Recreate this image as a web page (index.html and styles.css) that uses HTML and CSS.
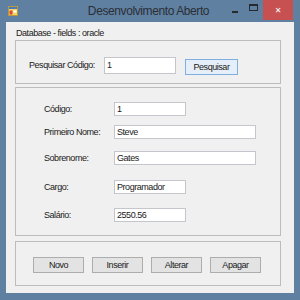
FILE: index.html
```html
<!DOCTYPE html>
<html lang="pt">
<head>
  <meta charset="UTF-8">
  <title>Desenvolvimento Aberto</title>
  <link rel="stylesheet" href="styles.css">
</head>
<body>

<div class="window">
  <div class="titlebar">
    <div class="title-left">
      <svg class="app-icon" width="10" height="10" viewBox="0 0 10 10">
        <rect x="0.5" y="0.5" width="9" height="9" fill="#f3d46a" stroke="#b89a3a"/>
        <rect x="1" y="1" width="8" height="2" fill="#4a78c2"/>
        <rect x="1.5" y="4.5" width="3" height="4" fill="#d8473a"/>
        <rect x="5.5" y="4.5" width="3" height="2" fill="#ffffff"/>
      </svg>
    </div>
    <div class="title">Desenvolvimento Aberto</div>
    <div class="controls">
      <span class="btn-min"><i></i></span>
      <span class="btn-max"><i></i></span>
      <span class="btn-close">&#x2715;</span>
    </div>
  </div>

  <div class="client">
    <div class="db-label">Database - fields : oracle</div>

    <!-- pesquisa -->
    <div class="group search">
      <label class="search-label">Pesquisar Código:</label>
      <div class="textbox short">1</div>
      <button class="btn btn-default">Pesquisar</button>
    </div>

    <!-- campos -->
    <div class="group fields">
      <div class="row">
        <label>Código:</label>
        <div class="textbox short">1</div>
      </div>
      <div class="row">
        <label>Primeiro Nome:</label>
        <div class="textbox long">Steve</div>
      </div>
      <div class="row">
        <label>Sobrenome:</label>
        <div class="textbox long">Gates</div>
      </div>
      <div class="row">
        <label>Cargo:</label>
        <div class="textbox short">Programador</div>
      </div>
      <div class="row">
        <label>Salário:</label>
        <div class="textbox short">2550.56</div>
      </div>
    </div>

    <!-- botoes -->
    <div class="group actions">
      <button class="btn">Novo</button>
      <button class="btn">Inserir</button>
      <button class="btn">Alterar</button>
      <button class="btn">Apagar</button>
    </div>
  </div>
</div>

</body>
</html>
```

FILE: styles.css
```css
body {
  margin: 0;
  font-family: "Liberation Sans", Arial, sans-serif;
  font-size: 9px;
  letter-spacing: -0.45px;
  color: #1a1a1a;
  white-space: nowrap;
}
.window {
  width: 300px;
  height: 300px;
  background: #5f80a1;
  box-sizing: border-box;
  padding-bottom: 7px;
}
.titlebar {
  height: 22px;
  display: grid;
  grid-template-columns: 1fr auto 1fr;
}
.title-left {
  padding: 6px 0 0 8px;
}
.app-icon {
  display: block;
}
.title {
  font-size: 12px;
  letter-spacing: -0.4px;
  line-height: 22px;
  color: #2b2f35;
  padding-right: 3px;
}
.controls {
  display: flex;
  justify-content: flex-end;
  align-items: flex-start;
  padding-right: 7px;
}
.controls span {
  display: flex;
  align-items: center;
  justify-content: center;
  height: 20px;
}
.btn-min {
  width: 17px;
}
.btn-min i {
  width: 6px;
  height: 2px;
  margin-top: 4px;
  background: #26292e;
}
.btn-max {
  width: 20px;
}
.btn-max i {
  width: 7px;
  height: 4px;
  margin-top: -5px;
  border: 1px solid #26292e;
  border-top-width: 2px;
}
.btn-close {
  width: 30px;
  background: #c75050;
  color: #fff;
  font-family: "DejaVu Sans", sans-serif;
  font-size: 8px;
  font-weight: bold;
  letter-spacing: 0;
}
.client {
  margin: 0 6px;
  height: 271px;
  background: #f0f0f0;
  box-sizing: border-box;
  padding: 5px 0 0 9px;
}
.db-label {
  height: 13px;
  line-height: 13px;
  padding-left: 1px;
}
.group {
  width: 266px;
  box-sizing: border-box;
  border: 1px solid #bcbcbc;
}
.search {
  height: 44px;
  display: flex;
  align-items: flex-start;
  padding: 16px 0 0 13px;
}
.search-label {
  width: 75px;
  line-height: 17px;
}
.search .textbox {
  height: 17px;
  line-height: 15px;
}
.textbox {
  box-sizing: border-box;
  height: 14px;
  line-height: 12px;
  background: #fff;
  border: 1px solid #c4c6cb;
  padding-left: 2px;
}
.short {
  width: 72px;
}
.long {
  width: 142px;
}
.btn {
  font: inherit;
  letter-spacing: inherit;
  color: #1a1a1a;
  width: 51px;
  height: 16px;
  padding: 0;
  background: #e3e3e3;
  border: 1px solid #adadad;
}
.btn-default {
  width: 53px;
  margin: 2px 0 0 9px;
  background: #e6eff9;
  border-color: #7fb0e0;
}
.fields {
  margin-top: 3px;
  height: 149px;
  padding-left: 28px;
}
.row {
  display: flex;
  align-items: center;
}
.row label {
  width: 70px;
}
.row:nth-child(1) { margin-top: 14px; }
.row:nth-child(2) { margin-top: 9px; }
.row:nth-child(3) { margin-top: 12px; }
.row:nth-child(4) { margin-top: 15px; }
.row:nth-child(5) { margin-top: 14px; }
.actions {
  margin-top: 5px;
  height: 45px;
  display: flex;
  align-items: flex-start;
  gap: 8px;
  padding: 15px 0 0 17px;
}
```
